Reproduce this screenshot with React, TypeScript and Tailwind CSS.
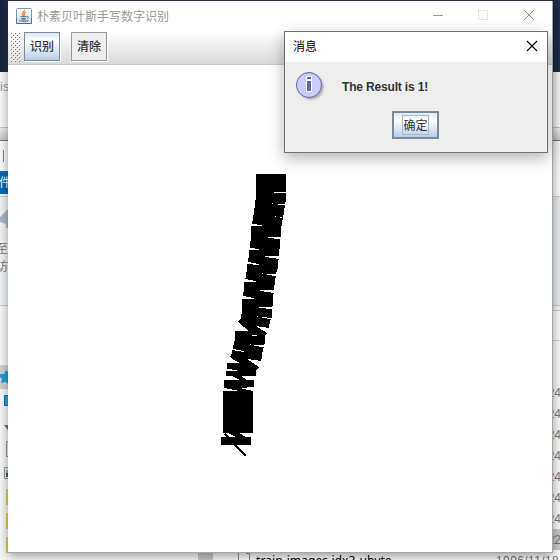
import React from "react";

const uiFont = "font-['Noto_Sans_CJK_SC',sans-serif]";

const LEFT_EDGE =
  "256,174 256,200 255,200 255,207 254,208 254,214 253,215 253,220 252,221 252,224 262,225 262,226 251,226 251,241 250,241 250,248 259,249 259,250 249,250 249,258 248,258 248,262 259,264 259,265 247,264 247,271 246,272 246,277 245,278 245,279 256,281 256,282 244,282 244,292 243,292 243,296 254,298 254,299 242,299 242,313 241,314 241,318 238,322 249,331 235,331 235,340 234,341 234,345 233,345 233,349 244,351 244,352 232,350 232,353 230,357 234,360 240,363 227,363 227,369 237,370 237,371 226,371 226,376 232,376 240,380 224,380 224,388 240,391 223,391 223,433 228,433 236,437 221,437 221,444 220,445";
const RIGHT_EDGE =
  "251,445 251,437 246,437 239,433 253,433 253,391 240,388 254,387 254,380 247,380 241,376 256,376 256,371 259,367 247,359 261,361 262,357 263,348 264,347 254,346 254,345 264,345 265,343 265,336 267,333 256,326 269,328 270,320 271,319 262,318 262,317 272,318 272,309 259,308 259,307 272,307 273,305 273,295 274,293 260,291 260,290 274,290 274,285 275,284 275,280 276,276 267,275 267,274 276,274 277,270 278,268 278,262 279,259 265,257 265,256 279,256 279,250 280,248 280,239 268,238 268,237 281,237 281,226 282,225 283,216 284,214 284,209 285,207 285,205 278,205 278,204 285,204 286,200 286,193 274,193 274,192 286,192 286,174";

function Drawing() {
  return (
    <svg className="absolute left-0 top-0" width="560" height="560" shapeRendering="crispEdges">
      <polygon points={`${LEFT_EDGE} ${RIGHT_EDGE}`} fill="#000" />
      <path d="M225 434L229 438M235 445L246 456" stroke="#000" strokeWidth="2" />
      <path d="M272 203h1v1h-1zM275 216h1v1h-1zM280 217h2v1h-2zM262 273h1v1h-1zM257 316h1v1h-1zM252 335h5v1h-5zM250 344h1v1h-1zM256 264h3v1h-3zM242 351h2v1h-2z" fill="#fff" />
    </svg>
  );
}

function JavaIcon() {
  return (
    <svg width="16" height="16" viewBox="0 0 16 16" className="shrink-0">
      <defs>
        <linearGradient id="tile" x1="0" y1="0" x2="0" y2="1">
          <stop offset="0" stopColor="#fafafa" />
          <stop offset="1" stopColor="#d3dce3" />
        </linearGradient>
      </defs>
      <rect x=".5" y=".5" width="15" height="15" rx="1" fill="url(#tile)" stroke="#7e98aa" />
      <path d="M.5 10v5.5h15V10" fill="none" stroke="#4e7189" />
      <path d="M8.3 1.8c1 1.7-2.8 2.7-1.7 4.6l1.2 1.8M9.8 4.4C7.8 5.2 7.8 6.4 8.8 7.5" fill="none" stroke="#ee8623" strokeWidth="1.3" />
      <path d="M4.5 8.6h6M5.2 10.4h4.6M10.7 8.7c2.6-.5 2.2 1.6.2 2M3.3 12.5c2.6 1 7 .9 9.3 0M5.5 11.8h4" fill="none" stroke="#4a7292" strokeWidth="1" />
    </svg>
  );
}

function SideStrip({ right = false }: { right?: boolean }) {
  return (
    <div className="flex w-2 shrink-0 flex-col overflow-hidden">
      <div className="h-[72px] shrink-0 bg-gradient-to-r from-[#172638] to-[#20324c]" />
      <div className="h-14 shrink-0 border-b border-[#c4c4c4] bg-[#fafafa] pt-1.5 text-[13px] leading-[18px] text-[#999] font-['Liberation_Sans',sans-serif]">
        {right ? "" : "is"}
      </div>
      <div className="h-[13px] shrink-0 border-b border-[#777] bg-gradient-to-b from-[#efefef] to-[#c8c8c8]" />
      <div className="flex h-[30px] shrink-0 items-center bg-[#fbfbfb] pl-[3px]">
        {!right && <span className="h-3 w-px bg-[#8a8a8a]" />}
      </div>
      <div className={`h-[23px] shrink-0 text-[12px] leading-[21px] text-white ${uiFont} ${right ? "bg-[#fbfbfb]" : "bg-[#0869b7]"}`}>
        {right ? "" : <span className="-ml-px inline-block w-3">件</span>}
      </div>
      <div className="h-[3px] shrink-0 border-b border-[#d0d0d0] bg-[#fafafa]" />
      <div className={`h-[109px] shrink-0 border-b border-[#c9cacb] ${right ? "bg-[#e7eaec]" : "bg-[#f4f5f7]"}`}>
        {!right && (
          <>
            <svg width="8" height="34" viewBox="0 0 8 34" className="block">
              <path d="M0 20L8 12v19H6V27L0 25z" fill="#a9b8d0" />
            </svg>
            <div className={`-ml-1 pt-2 text-[12px] leading-[18px] text-[#777] ${uiFont}`}>
              <div className="w-3">至</div>
              <div className="w-3">访</div>
            </div>
          </>
        )}
      </div>
      {right ? <RightList /> : <LeftTree />}
    </div>
  );
}

function LeftTree() {
  return (
    <svg width="8" height="254" viewBox="0 306 8 254" className="shrink-0">
      <path fill="#f9f9f9" d="M0 306h8v254H0z" />
      <path fill="#d2d2d2" d="M0 365h8v24H0z" />
      <path d="M0 374h4l2-4 2 2v12l-2-2-5 1 1-4-2-2z" fill="#239adf" />
      <path d="M8 395.5H4.5v10H8" fill="#22a4ef" stroke="#0877bc" />
      <path d="M4 425h4v5z" fill="#487ba6" />
      <path d="M8 441.5H6.5v15H8M8 467.5H4.5v11H8" fill="#eee" stroke="#999" />
      <path d="M6 470h2v3H6z" fill="#83b8e0" />
      <path d="M6 473h2v4H6z" fill="#386078" />
      <path d="M6 489h2v16H6zM6 513h2v16H6zM6 537h2v16H6z" fill="#f3ca4f" />
    </svg>
  );
}

function RightList() {
  return (
    <div className="flex shrink-0 flex-col">
      <div className="h-[5px] border-b border-[#c9c9c9] bg-[#f4f4f4]" />
      <div className="h-[30px] border-b border-[#d0d0d0] bg-[#fafafa]" />
      <div className="h-[41px] bg-[#fafafa]" />
      {["24", "24", "24", "24", "24", "24", "24", "22"].map((value, i) => (
        <div
          key={i}
          className={`flex h-[21px] justify-end text-[12px] leading-[22px] text-[#777] font-['Liberation_Sans',sans-serif] ${i === 7 ? "bg-[#c9c9c9]" : "bg-[#fafafa]"}`}
        >
          <span className="-mr-px">{value}</span>
        </div>
      ))}
      <div className="h-[10px] bg-white" />
    </div>
  );
}

function BottomFileRow() {
  return (
    <div className="absolute bottom-0 left-2 flex h-[10px] w-[552px] overflow-hidden bg-[#fcfcfc]">
      <div className="w-[190px] shrink-0" />
      <div className="w-[15px] shrink-0 bg-[#c9c9c9]" />
      <div className="w-[25px] shrink-0" />
      <svg width="12" height="10" className="shrink-0">
        <path d="M.5 10V.5h8l3 3V10M8.5.5v3h3" fill="#fff" stroke="#888" />
      </svg>
      <div className="w-[246px] shrink-0 pl-[6px] pt-[4px] text-[12.2px] leading-[14px] text-black font-['Noto_Sans',sans-serif]">
        train-images.idx3-ubyte
      </div>
      <div className="shrink-0 whitespace-nowrap pt-[4px] text-[12px] leading-[14px] tracking-[0.4px] text-[#777] font-['Liberation_Sans',sans-serif]">
        1996/11/18
      </div>
    </div>
  );
}

function Desktop() {
  return (
    <div className="flex h-full justify-between">
      <SideStrip />
      <SideStrip right />
      <BottomFileRow />
    </div>
  );
}

function ToolButton({ label, active = false }: { label: string; active?: boolean }) {
  return (
    <button
      className={`flex h-[29px] w-9 items-center justify-center border pb-px text-[12px] leading-[18px] text-[#333] shadow-[1px_1px_0_#fff] ${uiFont} font-medium ${
        active ? "border-[#7a8a99] bg-gradient-to-b from-[#dde8f3] via-white via-30% to-[#b8cfe5]" : "border-[#999] bg-[#eee]"
      }`}
    >
      {label}
    </button>
  );
}

function MainWindow() {
  return (
    <div className="absolute left-2 top-px h-[552px] w-[545px] border-b border-r border-[#a5a5a5] bg-white shadow-[0_3px_10px_0_rgba(0,0,0,0.4)]">
      <div className="flex h-[30px] items-center pl-2 pr-2">
        <JavaIcon />
        <span className={`ml-[5px] flex-1 pb-px text-[12px] leading-[26px] text-[#999] ${uiFont}`}>朴素贝叶斯手写数字识别</span>
        <svg width="120" height="30" className="shrink-0" shapeRendering="crispEdges">
          <path d="M9 14.5h10" stroke="#999" />
          <path d="M54.5 9.5h9v9h-9z" fill="none" stroke="#e5e5e5" />
          <path d="M100 9l10 10M110 9l-10 10" stroke="#999" shapeRendering="auto" />
        </svg>
      </div>
      <div className="flex h-[34px] border-b border-[#ccc] bg-gradient-to-b from-white via-[#f0f0f0] via-40% to-[#dadada] pl-[2px] pt-px">
        <svg width="11" height="30" className="mr-[3px] shrink-0" shapeRendering="crispEdges">
          <defs>
            <pattern id="grip" width="4" height="4" patternUnits="userSpaceOnUse">
              <path d="M1 1h1v1H1zM3 3h1v1H3z" fill="#777" />
              <path d="M2 2h1v1H2zM0 0h1v1H0z" fill="#fff" />
            </pattern>
          </defs>
          <rect width="11" height="30" fill="url(#grip)" />
        </svg>
        <div className="flex gap-[11px]">
          <ToolButton label="识别" active />
          <ToolButton label="清除" />
        </div>
      </div>
    </div>
  );
}

function InfoIcon() {
  return (
    <svg width="34" height="34" viewBox="0 0 34 34" className="shrink-0">
      <defs>
        <filter id="soft" x="-20%" y="-20%" width="150%" height="150%">
          <feGaussianBlur stdDeviation="1.2" />
        </filter>
      </defs>
      <circle cx="16" cy="16" r="12.5" fill="#aaa" filter="url(#soft)" />
      <circle cx="14" cy="14" r="12.5" fill="#ccccff" stroke="#666699" />
      <path d="M11 5h6v4h-6zM11 9h6v12h-6z" fill="#fff" />
      <path d="M12 6h4v2h-4zM12 10h4v10h-4z" fill="#666699" />
    </svg>
  );
}

function MessageDialog() {
  return (
    <div className="absolute left-[284px] top-[31px] flex h-[122px] w-[264px] flex-col border border-[#707070] bg-[#eee] shadow-[0_5px_15px_0_rgba(0,0,0,0.3)]">
      <div className="flex h-[30px] items-center justify-between bg-white pl-2 pr-[9px]">
        <span className={`pb-0.5 text-[12px] leading-[26px] text-black ${uiFont}`}>消息</span>
        <svg width="12" height="12" className="mb-0.5">
          <path d="M1 1l10 10M11 1L1 11" stroke="#000" strokeWidth="1.1" />
        </svg>
      </div>
      <div className="flex h-[49px] pl-[10px] pt-[9px]">
        <InfoIcon />
        <span className="ml-[13px] mt-[9px] text-[12px] font-bold leading-[14px] tracking-[-0.17px] text-[#333] font-['Liberation_Sans',sans-serif]">
          The Result is 1!
        </span>
      </div>
      <button className="ml-[107px] flex h-7 w-[47px] items-center justify-center border-2 border-[#7a8a99] bg-gradient-to-b from-[#dde8f3] via-white via-30% to-[#b8cfe5]">
        <span className={`flex h-5 w-[27px] items-center justify-center border border-[#a3b8cc] pb-px text-[12px] leading-[17px] text-[#333] ${uiFont}`}>
          确定
        </span>
      </button>
    </div>
  );
}

export default function App() {
  return (
    <div className="relative h-[560px] w-[560px] overflow-hidden bg-[#303344]">
      <Desktop />
      <MainWindow />
      <Drawing />
      <MessageDialog />
    </div>
  );
}
